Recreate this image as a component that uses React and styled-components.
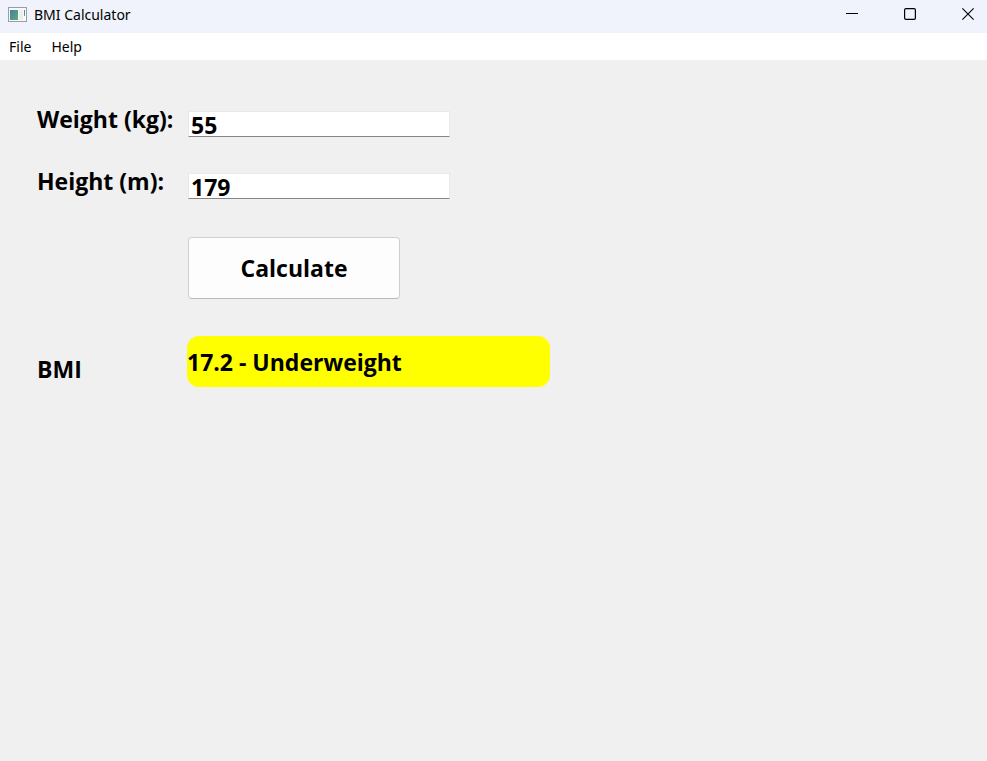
import React, { useState } from "react";
import styled, { createGlobalStyle } from "styled-components";

const GlobalStyle = createGlobalStyle`
  *, *::before, *::after { box-sizing: border-box; }
  body {
    margin: 0;
    background: #f0f0f0;
    color: #000;
    font-family: "Segoe UI", "Open Sans", "Noto Sans", sans-serif;
  }
`;

const Window = styled.div`
  display: flex;
  flex-direction: column;
  min-height: 100vh;
`;

const TitleBar = styled.header`
  display: flex;
  align-items: center;
  height: 33px;
  padding: 0 1px 4px 8px;
  background: #f0f3fb;
`;

const Title = styled.h1`
  flex: 1;
  margin: 0 0 0 7px;
  font-family: "Segoe UI", "Noto Sans", sans-serif;
  font-size: 14px;
  font-weight: 400;
  line-height: 20px;
`;

const WindowButtons = styled.div`
  display: flex;
  align-self: flex-start;
  gap: 22px;
`;

const WindowButton = styled.button`
  display: flex;
  align-items: center;
  justify-content: center;
  width: 36px;
  height: 28px;
  padding: 0;
  border: 0;
  background: transparent;
`;

const MenuBar = styled.nav`
  display: flex;
  gap: 4px;
  height: 27px;
  padding: 0 1px;
  background: #fff;
`;

const MenuItem = styled.button`
  padding: 0 8px;
  border: 0;
  background: transparent;
  color: #000;
  font-family: "Segoe UI", "Noto Sans", sans-serif;
  font-size: 14px;
  line-height: 26px;
`;

const Form = styled.form`
  display: flex;
  flex-direction: column;
  padding: 43px 37px;
  font-size: 23px;
  font-weight: 700;
`;

const Row = styled.div`
  display: grid;
  grid-template-columns: 151px minmax(0, 1fr);
  align-items: ${(p) => p.$align || "start"};
  min-height: 34px;
  margin-bottom: ${(p) => p.$gap || 0}px;
`;

const Label = styled.label`
  padding-bottom: 2px;
  line-height: 32px;
  white-space: nowrap;
`;

const Field = styled.input`
  align-self: end;
  width: 100%;
  max-width: 262px;
  height: 26px;
  padding: 2px 2px 0;
  border: 1px solid #e9e9e9;
  border-bottom-color: #868686;
  border-radius: 1px;
  outline: 0;
  background: #fff;
  color: #000;
  font: inherit;
  line-height: 23px;
`;

const CalculateButton = styled.button`
  grid-column: 2;
  width: 100%;
  max-width: 212px;
  height: 62px;
  padding: 0;
  border: 1px solid #d0d0d0;
  border-bottom-color: #bababa;
  border-radius: 4px;
  background: #fdfdfd;
  color: #000;
  font: inherit;
`;

const Result = styled.output`
  width: 100%;
  max-width: 363px;
  margin-left: -1px;
  padding-top: 2px;
  border-radius: 12px;
  background: #ff0;
  line-height: 49px;
`;

function AppIcon() {
  return (
    <svg width="19" height="15" viewBox="0 0 19 15" aria-hidden="true">
      <defs>
        <linearGradient id="pane" x1="0" y1="0" x2="1" y2="1">
          <stop offset="0" stopColor="#4b7ba5" />
          <stop offset="1" stopColor="#58ad78" />
        </linearGradient>
      </defs>
      <rect x="0.5" y="0.5" width="18" height="14" fill="#f8f9f9" stroke="#9b9fa3" />
      <rect x="2" y="3" width="8" height="10" fill="url(#pane)" />
      <rect x="11" y="3" width="4" height="10" fill="#ededee" />
      <rect x="16" y="3" width="1" height="6" fill="url(#pane)" />
    </svg>
  );
}

function classify(bmi) {
  if (bmi < 18.5) return "Underweight";
  if (bmi < 25) return "Normal";
  if (bmi < 30) return "Overweight";
  return "Obese";
}

function describe(weight, height) {
  const metres = Number(height) / 100;
  const bmi = Number(weight) / (metres * metres);
  return Number.isFinite(bmi) ? `${bmi.toFixed(1)} - ${classify(bmi)}` : "";
}

export default function App() {
  const [weight, setWeight] = useState("55");
  const [height, setHeight] = useState("179");
  const [result, setResult] = useState(describe("55", "179"));

  const calculate = (event) => {
    event.preventDefault();
    setResult(describe(weight, height));
  };

  return (
    <>
      <GlobalStyle />
      <Window>
        <TitleBar>
          <AppIcon />
          <Title>BMI Calculator</Title>
          <WindowButtons>
            <WindowButton type="button" aria-label="Minimize">
              <svg width="12" height="12" viewBox="0 0 12 12">
                <path d="M0 5.5H12" stroke="#000" />
              </svg>
            </WindowButton>
            <WindowButton type="button" aria-label="Maximize">
              <svg width="12" height="12" viewBox="0 0 12 12">
                <rect x="0.6" y="0.6" width="10.8" height="10.8" rx="1.4" fill="none" stroke="#000" strokeWidth="1.2" />
              </svg>
            </WindowButton>
            <WindowButton type="button" aria-label="Close">
              <svg width="12" height="12" viewBox="0 0 12 12">
                <path d="M0.4 0.4L11.6 11.6M11.6 0.4L0.4 11.6" stroke="#000" strokeWidth="1.1" />
              </svg>
            </WindowButton>
          </WindowButtons>
        </TitleBar>
        <MenuBar>
          <MenuItem type="button">File</MenuItem>
          <MenuItem type="button">Help</MenuItem>
        </MenuBar>
        <Form onSubmit={calculate}>
          <Row $gap={28}>
            <Label htmlFor="weight">Weight (kg):</Label>
            <Field id="weight" value={weight} onChange={(e) => setWeight(e.target.value)} />
          </Row>
          <Row $gap={38}>
            <Label htmlFor="height">Height (m):</Label>
            <Field id="height" value={height} onChange={(e) => setHeight(e.target.value)} />
          </Row>
          <Row $gap={37}>
            <CalculateButton type="submit">Calculate</CalculateButton>
          </Row>
          <Row $align="end">
            <Label htmlFor="bmi">BMI</Label>
            <Result id="bmi">{result}</Result>
          </Row>
        </Form>
      </Window>
    </>
  );
}
